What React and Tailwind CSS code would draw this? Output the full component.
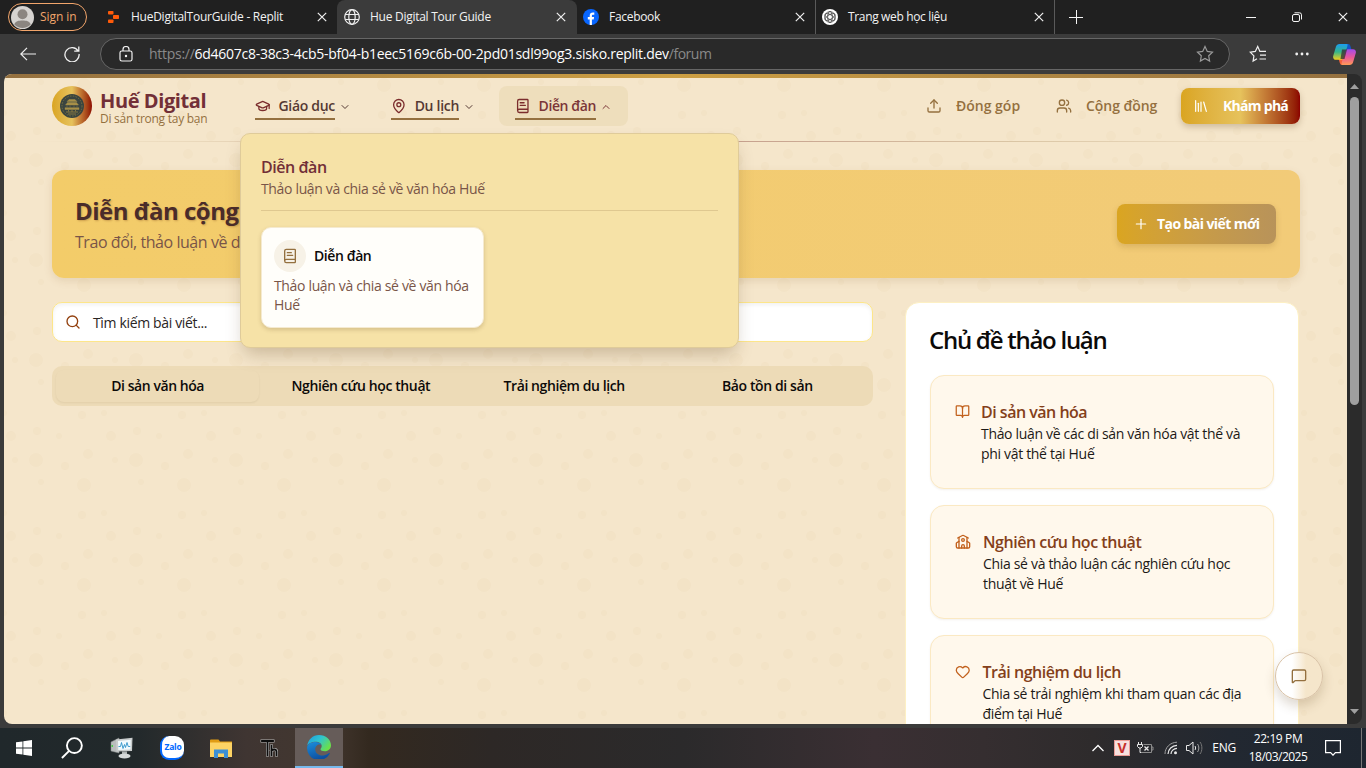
import React from "react";
import {
  BookOpen, BookText, ChevronDown, ChevronUp, GraduationCap, Heart, Library,
  MapPin, MessageSquare, Plus, School, Search, Upload, Users,
} from "lucide-react";

const DOTS = [
  [82, 15, 4], [4, 13, 3], [11, 36, 5], [37, 31, 4], [59, 36, 3], [15, 60, 3],
  [36, 60, 7], [65, 66, 4], [88, 54, 5], [41, 82, 3], [84, 85, 7],
];

function CloseX({ className = "" }) {
  return (
    <svg className={className} width="10" height="10" viewBox="0 0 10 10" stroke="#f0f0f0" strokeWidth="1.2">
      <path d="M.8.8l8.4 8.4M9.2.8L.8 9.2" />
    </svg>
  );
}

function TabBar() {
  return (
    <div className="flex h-[34px] w-full shrink-0 bg-[#202020] text-[12px] leading-4 text-[#f2f2f2]">
      <div className="flex w-[97px] shrink-0 pt-[3px] pl-2">
        <div className="flex h-[28px] w-[79px] items-center rounded-full border border-[#f2a56b] pl-[2px] text-[#f2a56b]">
          <svg width="23" height="23" viewBox="0 0 23 23">
            <circle cx="11.5" cy="11.5" r="11.5" fill="#d6d3d0" />
            <circle cx="11.5" cy="8.3" r="5" fill="#8b8580" />
            <path d="M3.3 18.5c1-3.4 4.400-4 8.200-4s7.200.6 8.200 4a11.500 11.500 0 0 1-16.400 0z" fill="#8b8580" />
          </svg>
          <span className="pl-[6px] tracking-[-0.07px]">Sign in</span>
        </div>
      </div>
      <div className="flex w-[240px] shrink-0 items-center pl-[11px]">
        <svg width="11" height="12" viewBox="0 0 11 12" fill="#ff5b0a">
          <rect x="0" y="0" width="5.500" height="3.500" rx=".8" />
          <rect x="5" y="4" width="6" height="4" rx=".8" />
          <rect x="0" y="8.500" width="5.500" height="3.500" rx=".8" />
        </svg>
        <span className="ml-3 w-[186px] tracking-[-0.26px]">HueDigitalTourGuide - Replit</span>
        <CloseX />
      </div>
      <div className="flex w-[240px] shrink-0 items-center rounded-t-[8px] bg-[#3b3b3b] pl-[7px]">
        <svg width="16" height="16" viewBox="0 0 16 16" fill="none" stroke="#f0f0f0" strokeWidth="1.200">
          <circle cx="8" cy="8" r="7.300" />
          <ellipse cx="8" cy="8" rx="3.200" ry="7.300" />
          <path d="M1.300 5.500h13.400M1.300 10.500h13.400" />
        </svg>
        <span className="ml-[10px] w-[186px] tracking-[-0.27px]">Hue Digital Tour Guide</span>
        <CloseX />
      </div>
      <div className="flex w-[239px] shrink-0 items-center border-r border-[#5a5a5a] pl-[6px]">
        <svg width="16" height="16" viewBox="0 0 16 16">
          <circle cx="8" cy="8" r="8" fill="#0866ff" />
          <path d="M6.700 15.900v-5.400H4.800V8h1.900V6.800c0-2.300 1.100-3.400 3.300-3.400.5 0 1 .1 1.300.2v2.200H10c-.8 0-1.100.4-1.100 1.200V8h2.200l-.4 2.500H8.900v5.400z" fill="#fff" />
        </svg>
        <span className="ml-[10px] w-[186px] tracking-[-0.3px]">Facebook</span>
        <CloseX />
      </div>
      <div className="flex w-[239px] shrink-0 items-center border-r border-[#5a5a5a] pl-[6px]">
        <svg width="16" height="16" viewBox="0 0 16 16" fill="none">
          <circle cx="8" cy="8" r="8" fill="#fff" />
          <g stroke="#333" strokeWidth=".7">
            <ellipse cx="8" cy="8" rx="2.300" ry="5.600" />
            <ellipse cx="8" cy="8" rx="2.300" ry="5.600" transform="rotate(60 8 8)" />
            <ellipse cx="8" cy="8" rx="2.300" ry="5.600" transform="rotate(120 8 8)" />
            <circle cx="8" cy="8" r="5.400" />
          </g>
        </svg>
        <span className="ml-[10px] w-[186px] tracking-[-0.35px]">Trang web học liệu</span>
        <CloseX />
      </div>
      <div className="flex flex-1 items-center justify-between pr-[18px] pl-[14px]">
        <svg width="14" height="14" viewBox="0 0 14 14" stroke="#f5f5f5"><path d="M7.500 0v14M0 7.500h14" /></svg>
        <div className="flex items-center gap-[36px]">
          <svg width="10" height="10" viewBox="0 0 10 10" stroke="#f5f5f5"><path d="M0 5.500h10" /></svg>
          <svg width="10" height="10" viewBox="0 0 10 10" fill="none" stroke="#f5f5f5">
            <rect x=".5" y="2.500" width="7" height="7" rx="1.500" />
            <path d="M2.500.8h5a2 2 0 0 1 2 2v4.700" />
          </svg>
          <CloseX />
        </div>
      </div>
    </div>
  );
}

const STAR = "M9 1.500l2.300 4.900 5.200.7-3.800 3.700.9 5.300L9 13.500l-4.600 2.600.9-5.300L1.500 7.100l5.200-.7z";

function Toolbar() {
  return (
    <div className="flex h-10 w-full shrink-0 items-center bg-[#3b3b3b] pl-5">
      <svg width="16" height="14" viewBox="0 0 16 14" fill="none" stroke="#f0f0f0" strokeWidth="1.200">
        <path d="M7 .8L.8 7 7 13.200M.8 7H16" />
      </svg>
      <svg className="ml-7" width="16" height="16" viewBox="0 0 16 16" fill="none" stroke="#f0f0f0" strokeWidth="1.300">
        <path d="M14.200 5.200A7.100 7.100 0 1 0 15.100 8M14.800.6v4.600h-4.600" />
      </svg>
      <div className="ml-[20px] flex h-8 w-[1130px] items-center rounded-full border border-[#666] bg-[#292929] pl-[18px] text-[14px] leading-5 text-[#8a8a8a]">
        <svg width="14" height="16" viewBox="0 0 14 16" fill="none" stroke="#f0f0f0" strokeWidth="1.200">
          <rect x="1" y="5" width="12" height="10" rx="1.800" />
          <path d="M4 5V3.500a3 3 0 0 1 6 0V5" />
          <circle cx="7" cy="10" r=".6" fill="#f0f0f0" />
        </svg>
        <div className="ml-[16px] flex-1 whitespace-nowrap">
          <span className="tracking-[-0.28px]">https://</span>
          <span className="tracking-[-0.27px] text-white">6d4607c8-38c3-4cb5-bf04-b1eec5169c6b-00-2pd01sdl99og3.sisko.replit.dev</span>
          <span className="tracking-[-0.500px]">/forum</span>
        </div>
        <svg className="mr-[15px]" width="18" height="18" viewBox="0 0 18 18" fill="none" stroke="#9a9a9a" strokeWidth="1.200"><path d={STAR} /></svg>
      </div>
      <svg className="ml-[19px]" width="18" height="18" viewBox="0 0 18 18" fill="none" stroke="#f0f0f0" strokeWidth="1.200">
        <path d="M8 13.800l-3.900 2.300.8-5.200L1.300 7.200l5-.8L8.700 1.500l2.200 4.900h6.100M11 10.200h6M10.500 14h6.500" />
      </svg>
      <svg className="ml-[28px]" width="14" height="4" viewBox="0 0 14 4" fill="#f0f0f0">
        <circle cx="1.700" cy="2" r="1.400" /><circle cx="7" cy="2" r="1.400" /><circle cx="12.300" cy="2" r="1.400" />
      </svg>
      <svg className="ml-[24px]" width="23" height="21" viewBox="0 0 23 21">
        <defs>
          <linearGradient id="cpA" x1="0" y1="0" x2="0" y2="1"><stop offset="0" stopColor="#1b9df0" /><stop offset=".5" stopColor="#35b58a" /><stop offset="1" stopColor="#f2cf1d" /></linearGradient>
          <linearGradient id="cpB" x1="0" y1="0" x2="0" y2="1"><stop offset="0" stopColor="#a44bea" /><stop offset=".5" stopColor="#e9579a" /><stop offset="1" stopColor="#ff9a55" /></linearGradient>
        </defs>
        <path d="M12 0h3.200c1.200 0 1.800.8 2.200 2l1.100 4h-5z" fill="#1257c9" />
        <path d="M5.500 14.500l1.300 4.500c.4 1.200 1 2 2.200 2h3.500l2-6z" fill="#f4603a" />
        <path d="M6.500 0h7c1.300 0 1.200 1 .9 2l-3.500 11.500c-.5 1.500-1.400 2.300-3 2.300H3C.8 15.800-.3 14 .2 12L3 2.500C3.500 1 4.700 0 6.500 0z" fill="url(#cpA)" />
        <path d="M16.500 21h-6.800c-1.300 0-1.400-.8-1.100-2l3.500-11.500c.5-1.500 1.400-2.200 3-2.200H20c2.200 0 3.300 1.700 2.800 3.700L20 18.500c-.5 1.500-1.700 2.500-3.500 2.500z" fill="url(#cpB)" />
        <path d="M9 5.500h5l-2.500 9.500h-4z" fill="#33302e" opacity=".75" />
      </svg>
    </div>
  );
}

function Medallion() {
  return (
    <div className="flex h-10 w-10 items-center justify-center rounded-full bg-linear-to-r from-[#daa520] from-0% via-[#e6c25c] via-50% to-[#8b0000] to-100%">
      <svg width="24" height="24" viewBox="0 0 24 24" fill="none">
        <circle cx="12" cy="12" r="12" fill="#3a4440" />
        <circle cx="12" cy="12" r="10" stroke="#75703f" strokeDasharray="1.500 1.300" />
        <path d="M7 7.500h10l-2-2H9zM5.500 11h13l-2-2.500h-9zM5 15.500h14v-1.800H5zM7 11.500v2M10 11.500v2M14 11.500v2M17 11.500v2" fill="#a68f48" stroke="#a68f48" strokeWidth=".4" />
        <path d="M6 18h12M8 20h8M8.500 16v1.500M12 16v2M15.500 16v1.500" stroke="#8f7e42" strokeWidth=".9" />
      </svg>
    </div>
  );
}

function NavItem({ icon: Icon, label, width, track = "tracking-[-0.300px]", open }) {
  const Chevron = open ? ChevronUp : ChevronDown;
  return (
    <div className={`flex h-10 items-center rounded-lg px-4 ${open ? "bg-[#eedebc] text-[#7b3538]" : "text-[#553a34]"}`}>
      <div className={`flex h-7 shrink-0 items-center border-b-2 border-[#94703f] pt-[1px] text-[14px] font-semibold ${track} ${width}`}>
        <Icon size={16} color="#7b2d2d" strokeWidth={2} />
        <span className="ml-2 whitespace-nowrap leading-5">{label}</span>
      </div>
      <Chevron className="mt-[2px] ml-1" size={12} strokeWidth={2} />
    </div>
  );
}

function Header() {
  return (
    <header className="relative flex h-[64px] shrink-0 flex-col pr-[47px] pl-12">
      <div className="flex h-[56px] items-center">
        <Medallion />
        <div className="ml-2 w-[139px] pt-[5px] whitespace-nowrap">
          <div className="text-[20px] leading-5 font-bold tracking-[-0.400px] text-[#722f37]">Huế Digital</div>
          <div className="text-[12px] leading-4 tracking-[-0.260px] text-[#94703f]">Di sản trong tay bạn</div>
        </div>
        <nav className="flex gap-2">
          <NavItem icon={GraduationCap} label="Giáo dục" width="w-20" />
          <NavItem icon={MapPin} label="Du lịch" width="w-[68px]" />
          <NavItem icon={BookText} label="Diễn đàn" width="w-[81px]" track="tracking-[-0.400px]" open />
        </nav>
        <div className="ml-auto flex h-9 items-center text-[14px] leading-5 font-semibold text-[#94703f]">
          <Upload size={16} />
          <span className="ml-[14px] w-[100px] whitespace-nowrap">Đóng góp</span>
          <Users size={16} />
          <span className="ml-[14px] w-[95px] whitespace-nowrap tracking-[-0.050px]">Cộng đồng</span>
          <button className="flex h-9 w-[119px] items-center rounded-lg bg-linear-to-r from-[#daa520] from-0% via-[#e6c25c] via-50% to-[#8b0000] to-100% pl-3 font-bold text-white shadow-[0_3px_6px_rgba(90,60,20,0.25)]">
            <Library size={16} strokeWidth={1.800} />
            <span className="ml-[14px] whitespace-nowrap tracking-[-0.720px]">Khám phá</span>
          </button>
        </div>
      </div>
      <div className="mt-[7px] -mr-[47px] -ml-12 h-px bg-[linear-gradient(90deg,transparent_2%,rgba(148,112,63,0.12)_15%,rgba(123,45,45,0.42)_50%,rgba(148,112,63,0.28)_75%,transparent_98%)]" />
    </header>
  );
}

function ForumMenu() {
  return (
    <div className="absolute top-[59px] left-[236px] h-[215px] w-[499px] rounded-[10px] border border-[#dfcb9a] bg-[#f6e2a7] px-5 pt-[21px] shadow-[0_10px_18px_-4px_rgba(90,60,20,0.28)]">
      <div className="text-[16px] leading-6 font-semibold tracking-[-0.460px] text-[#722f37]">Diễn đàn</div>
      <div className="text-[14px] leading-[19px] tracking-[-0.340px] text-[#795548]">Thảo luận và chia sẻ về văn hóa Huế</div>
      <div className="mt-[12px] h-px bg-[#dfc890]" />
      <div className="mt-[16px] h-[101px] w-[223px] rounded-[10px] border border-[#f5ead0] bg-[#fffefa] px-3 pt-3 shadow-[0_2px_4px_rgba(90,60,20,0.2)]">
        <div className="flex items-center gap-2">
          <div className="flex h-8 w-8 items-center justify-center rounded-full bg-[#f7f2e7] text-[#94703f]">
            <BookText size={16} />
          </div>
          <span className="text-[14px] leading-5 font-semibold tracking-[-0.410px] text-[#0c0a09]">Diễn đàn</span>
        </div>
        <div className="mt-1 text-[14px] leading-[19px] tracking-[-0.340px] text-[#795548]">
          <div className="whitespace-nowrap">Thảo luận và chia sẻ về văn hóa</div>
          <div>Huế</div>
        </div>
      </div>
    </div>
  );
}

function Banner() {
  return (
    <section className="flex h-[108px] shrink-0 items-center justify-between rounded-xl bg-linear-to-r from-[#f3cc69] to-[#f2cb78] pr-6 pl-[23px] shadow-[0_3px_8px_rgba(120,80,20,0.13)]">
      <div className="pt-1">
        <h1 className="text-[24px] leading-8 font-bold tracking-[-0.490px] text-[#4a2c2a] [text-shadow:1px_1px_2px_rgba(120,60,20,0.3)]">Diễn đàn cộng đồng</h1>
        <p className="text-[16px] leading-[30px] tracking-[-0.440px] text-[#795548]">Trao đổi, thảo luận về di sản văn hóa Huế</p>
      </div>
      <button className="flex h-10 w-[159px] items-center rounded-lg bg-linear-to-r from-[#daa520] to-[#b8935a] pl-4 text-[14px] leading-5 font-bold text-white shadow-[0_3px_6px_rgba(120,80,20,0.2)]">
        <Plus size={16} strokeWidth={1.800} />
        <span className="ml-2 whitespace-nowrap tracking-[-0.580px]">Tạo bài viết mới</span>
      </button>
    </section>
  );
}

const TABS = [
  ["Di sản văn hóa", "tracking-[-0.440px]"],
  ["Nghiên cứu học thuật", "tracking-[-0.390px]"],
  ["Trải nghiệm du lịch", "tracking-[-0.420px]"],
  ["Bảo tồn di sản", "tracking-[-0.390px]"],
];

const TOPICS = [
  { icon: BookOpen, size: 15, gap: "ml-[11px]", title: "Di sản văn hóa", track: "tracking-[-0.500px]", lines: ["Thảo luận về các di sản văn hóa vật thể và", "phi vật thể tại Huế"] },
  { icon: School, size: 16, gap: "ml-3", title: "Nghiên cứu học thuật", track: "tracking-[-0.460px]", lines: ["Chia sẻ và thảo luận các nghiên cứu học", "thuật về Huế"] },
  { icon: Heart, size: 15.500, gap: "ml-3", title: "Trải nghiệm du lịch", track: "tracking-[-0.480px]", lines: ["Chia sẻ trải nghiệm khi tham quan các địa", "điểm tại Huế"] },
];

function TopicCard({ topic }) {
  const Icon = topic.icon;
  return (
    <div className="flex h-[114px] shrink-0 items-start rounded-[14px] border border-[#fbe9c3] bg-[#fff8ec] pt-[25px] pl-6 shadow-[0_1px_2px_rgba(120,80,20,0.08)]">
      <Icon className="mt-[3px] shrink-0" size={topic.size} color="#c2611d" />
      <div className={`${topic.gap} whitespace-nowrap`}>
        <h3 className={`mb-px text-[16px] leading-[22px] font-semibold text-[#843f1a] ${topic.track}`}>{topic.title}</h3>
        {topic.lines.map((l) => (
          <p key={l} className="text-[14px] leading-5 tracking-[-0.320px] text-[#1c1917]">{l}</p>
        ))}
      </div>
    </div>
  );
}

function ForumPage() {
  return (
    <div className="relative flex h-[650px] w-[1343px] flex-col overflow-hidden rounded-l-[8px] bg-[#f5e6cb]">
      <svg className="absolute inset-0" width="1343" height="650">
        <defs>
          <pattern id="dots" x="-4" y="-74" width="100" height="100" patternUnits="userSpaceOnUse">
            {DOTS.map(([x, y, r]) => <circle key={`${x}-${y}`} cx={x} cy={y} r={r} fill="#f3e3c6" />)}
          </pattern>
        </defs>
        <rect width="1343" height="650" fill="url(#dots)" />
      </svg>
      <div className="relative h-1 shrink-0 bg-linear-to-r from-[#94703f] via-[#cd9f42] to-[#94703f]" />
      <Header />
      <main className="relative mt-[28px] flex flex-col pr-[47px] pl-12">
        <Banner />
        <div className="mt-6 flex items-start gap-8">
          <div className="w-[821px]">
            <div className="flex h-10 items-center rounded-[10px] border border-[#fde68a] bg-white pl-3 text-[14px] text-[#292524] shadow-[inset_0_2px_4px_rgba(0,0,0,0.06)]">
              <Search className="-mt-px" size={16} color="#92400e" />
              <span className="ml-3 tracking-[-0.350px]">Tìm kiếm bài viết...</span>
            </div>
            <div className="mt-6 flex h-10 rounded-[10px] bg-[#eddbb7] p-1 text-[14px] font-semibold text-[#0c0a09]">
              {TABS.map(([t, track], i) => (
                <div key={t} className={`flex h-8 flex-1 items-center justify-center rounded-lg pb-[2px] ${track} ${i === 0 ? "shadow-[0_1px_2px_rgba(90,60,20,0.08)]" : ""}`}>{t}</div>
              ))}
            </div>
          </div>
          <aside className="flex h-[520px] w-[394px] flex-col rounded-[14px] border border-[#fdf0c4] bg-white px-6">
            <h2 className="mt-[21px] -ml-px text-[24px] leading-8 font-semibold tracking-[-1.270px] text-[#0c0a09]">Chủ đề thảo luận</h2>
            <div className="mt-[19px] flex flex-col gap-4">
              {TOPICS.map((t) => <TopicCard key={t.title} topic={t} />)}
            </div>
          </aside>
        </div>
      </main>
      <ForumMenu />
      <button className="absolute top-[578px] left-[1271px] flex h-12 w-12 items-center justify-center rounded-full border border-[#d9c3a8] bg-linear-to-r from-white from-35% to-[#f5e6cb] to-65% text-[#94703f] shadow-[0_6px_12px_rgba(90,60,20,0.2)]">
        <MessageSquare size={16} />
      </button>
    </div>
  );
}

function Scrollbar() {
  return (
    <div className="flex h-[650px] w-[15px] flex-col items-center rounded-r-[8px] bg-[#2b2b2b] pt-[10px]">
      <svg width="9" height="5" viewBox="0 0 9 5" fill="#9f9f9f"><path d="M4.500 0L9 5H0z" /></svg>
      <div className="mt-2 h-[308px] w-[9px] rounded-full bg-[#9f9f9f]" />
      <svg className="mt-auto mb-[10px]" width="9" height="5" viewBox="0 0 9 5" fill="#9f9f9f"><path d="M4.500 5L9 0H0z" /></svg>
    </div>
  );
}

function Taskbar() {
  return (
    <div className="flex h-10 w-full shrink-0 items-center bg-[linear-gradient(90deg,#20282b_0%,#22292b_10%,#3f3532_18%,#43372f_24%,#33291f_27%,#2d2826_36%,#2b2a2b_50%,#3a2f33_64%,#352e30_72%,#2e2b2c_80%,#222831_90%,#1e2630_100%)] text-[12px] text-white">
      <div className="flex w-12 justify-center">
        <svg width="16" height="16" viewBox="0 0 16 16" fill="#fff"><path d="M0 2.300l6.500-.9v6.200H0zM7.300 1.300L16 0v7.600H7.300zM0 8.400h6.500v6.200L0 13.700zM7.300 8.400H16V16l-8.700-1.300z" /></svg>
      </div>
      <div className="flex w-12 justify-center">
        <svg width="22" height="22" viewBox="0 0 23 23" fill="none" stroke="#fff" strokeWidth="2"><circle cx="14" cy="9" r="7.800" /><path d="M8.500 14.500L1 22" /></svg>
      </div>
      <div className="flex w-[52px] justify-center">
        <svg width="24" height="22" viewBox="0 0 24 22">
          <path d="M1 5l8-4v15l-8-2z" fill="#b9bdbd" stroke="#8a8f8f" strokeWidth=".5" />
          <rect x="1.500" y="8" width="1.500" height="2" fill="#4ccc4a" />
          <path d="M6 2.500L22.500 0.800 22 14 6.500 14.500z" fill="#c9cdcd" />
          <path d="M8 4l12.800-1.300L20.500 12.500 8.300 13z" fill="#f1fafd" />
          <path d="M8.500 9.500h2l1-4 1.500 6 1.500-4 1 3 1.500-5 1.200 4h2" fill="none" stroke="#2f93c9" strokeWidth=".9" />
          <path d="M12 14.400h5v4h-5z" fill="#aeb3b3" />
          <ellipse cx="14.500" cy="19" rx="6" ry="2.600" fill="#d5d9d9" />
        </svg>
      </div>
      <div className="flex w-12 justify-center">
        <div className="flex h-6 w-6 items-center justify-center rounded-[9px] border-b-2 border-l-2 border-[#0068ff] bg-white">
          <span className="text-[8.500px] leading-none font-bold tracking-[-0.200px] text-[#0068ff]">Zalo</span>
        </div>
      </div>
      <div className="flex w-12 justify-center pl-[2px]">
        <svg width="22" height="19" viewBox="0 0 22 19">
          <path d="M0 1.500C0 .6.600.5 1 .5h7.500l1.500 2H22V18H0z" fill="#e09c15" />
          <path d="M0 3.500h22V18H0z" fill="#fcd365" />
          <path d="M4 10.500h14V19h-4v-4.500H8V19H4z" fill="#3c8fd5" />
        </svg>
      </div>
      <div className="flex w-[51px] justify-center">
        <svg width="20" height="20" viewBox="0 0 20 20" fill="none" strokeLinecap="square">
          <path d="M2 3h11M7.500 3v14M11.500 8v9M11.500 12.500c2-1.500 5-1.500 5 1V17" stroke="#b9b9b9" strokeWidth="3" />
          <path d="M2 3h11M7.500 3v14M11.500 8v9M11.500 12.500c2-1.500 5-1.500 5 1V17" stroke="#0d0d0d" strokeWidth="1.800" />
        </svg>
      </div>
      <div className="flex h-10 w-12 items-center justify-center border-b-2 border-[#76b9ed] bg-[#665c59]">
        <svg width="24" height="24" viewBox="0 0 24 24">
          <defs>
            <linearGradient id="egA" x1="0" y1="0" x2="1" y2=".6"><stop offset="0" stopColor="#1a9be0" /><stop offset=".5" stopColor="#2fc3d0" /><stop offset="1" stopColor="#6ae04a" /></linearGradient>
            <linearGradient id="egB" x1="0" y1="0" x2=".4" y2="1"><stop offset="0" stopColor="#1c8fdc" /><stop offset="1" stopColor="#0c4fa0" /></linearGradient>
          </defs>
          <path d="M.2 11C.8 4.800 5.800 0 12 0c6.800 0 12 4.700 12 10.200 0 3.600-2.700 6-6.200 6-2.700 0-4.300-.9-4.300-2 0-.8 1.200-1.300 1.200-3.200C14.700 8.600 12 6.800 8.800 6.800 4.600 6.800 1.300 8.600.2 11z" fill="url(#egA)" />
          <path d="M.1 12.500C.4 9 4 6.900 8.500 6.900c2.800 0 5 1.200 5.900 2.800-3.200-1.200-6.200 1.100-6.200 4.600 0 4.200 4 6.700 8.200 6.200 2.300-.2 4.200-1.200 5.700-2.400.5-.3.900.1.600.6A12 12 0 0 1 .1 12.500z" fill="url(#egB)" />
        </svg>
      </div>
      <div className="ml-auto flex h-full items-center">
        <svg width="12" height="8" viewBox="0 0 12 8" fill="none" stroke="#fff" strokeWidth="1.300"><path d="M.5 7L6 1.500 11.500 7" /></svg>
        <div className="ml-[10px] flex h-4 w-4 items-center justify-center border border-[#e99b95] bg-[#f7e0de] text-[14px] leading-none font-bold text-[#c5302c]">V</div>
        <svg className="ml-[7px]" width="17" height="14" viewBox="0 0 17 14" fill="none" stroke="#e8e8e8">
          <path d="M1.500 1v2.500M4.500 1v2.500M.5 3.500h5v2l-1.500 1.500h-2L.5 5.500zM3 7v4.500h1.500" />
          <path d="M6.500 3.500h8v8h-10M14.500 6h1.500v3h-1.500" stroke="#8c8c8c" />
          <path d="M7.500 5.500l4 4M11.500 5.500l-4 4" strokeWidth="1.300" />
        </svg>
        <svg className="ml-[10px]" width="14" height="14" viewBox="0 0 14 14" fill="none" stroke="#e8e8e8">
          <path d="M1 13C1 6.500 6 1.500 13 1.200" stroke="#a0a0a0" />
          <path d="M4 13c0-4.800 4-8.400 9-8.700M7 13c0-3 2.600-5.400 6-5.600" strokeWidth="1.200" />
          <circle cx="11.500" cy="11.800" r="1.500" fill="#e8e8e8" stroke="none" />
        </svg>
        <svg className="ml-[8px]" width="17" height="14" viewBox="0 0 17 14" fill="none" stroke="#e8e8e8">
          <path d="M.5 4.500H3l4-3.500v12l-4-3.500H.5z" />
          <path d="M9 5c.8 1 .8 3 0 4" /><path d="M11.500 3c1.800 2 1.800 6 0 8" stroke="#a0a0a0" /><path d="M14 1c2.500 3 2.500 9 0 12" stroke="#777" />
        </svg>
        <span className="ml-[9px] tracking-[-0.200px]">ENG</span>
        <div className="ml-[13px] flex w-[58px] flex-col items-center text-center leading-[18px] whitespace-nowrap">
          <span className="tracking-[-0.380px]">22:19 PM</span>
          <span className="tracking-[-0.520px]">18/03/2025</span>
        </div>
        <svg className="mr-[20px] ml-[18px]" width="16" height="16" viewBox="0 0 16 16" fill="none" stroke="#fff" strokeWidth="1.200"><path d="M.6.600h14.800v12h-5L8 15.200l-2.400-2.600h-5z" /></svg>
        <div className="mr-1 h-full w-px bg-[#777]" />
      </div>
    </div>
  );
}

export default function App() {
  return (
    <div className="flex h-[768px] w-[1366px] flex-col overflow-hidden bg-[#3b3b3b] font-['Open_Sans','Noto_Sans',sans-serif]">
      <TabBar />
      <Toolbar />
      <div className="mb-1 flex h-[650px] shrink-0 pl-1">
        <ForumPage />
        <Scrollbar />
      </div>
      <Taskbar />
    </div>
  );
}
